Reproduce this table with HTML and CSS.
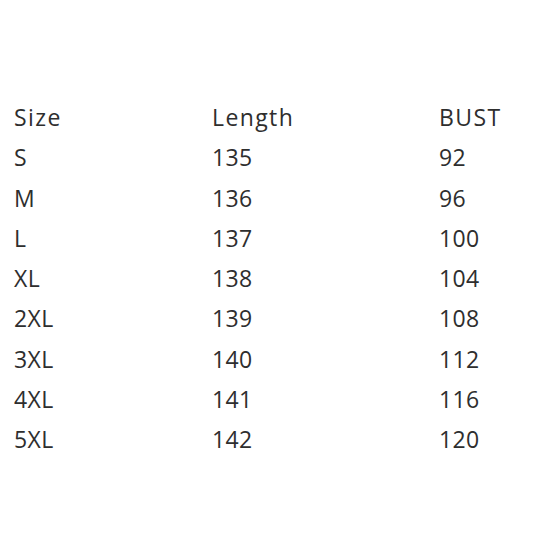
FILE: index.html
```html
<!DOCTYPE html>
<html>
<head>
<meta charset="utf-8">
<link rel="stylesheet" href="styles.css">
</head>
<body>
<div class="table">
  <div class="head">Size</div><div class="head">Length</div><div class="head">BUST</div>
  <div>S</div><div>135</div><div>92</div>
  <div>M</div><div>136</div><div>96</div>
  <div>L</div><div>137</div><div>100</div>
  <div>XL</div><div>138</div><div>104</div>
  <div>2XL</div><div>139</div><div>108</div>
  <div>3XL</div><div>140</div><div>112</div>
  <div>4XL</div><div>141</div><div>116</div>
  <div>5XL</div><div>142</div><div>120</div>
</div>
</body>
</html>
```
FILE: styles.css
```css
html, body {
  margin: 0;
  background: #fff;
}
body {
  width: 540px;
  height: 540px;
  font-family: "Open Sans", sans-serif;
  color: #2e2e2e;
}
.table {
  display: grid;
  grid-template-columns: 198px 227px auto;
  padding: 97px 0 0 14px;
  font-size: 23px;
  line-height: 40.25px;
  letter-spacing: 0.4px;
}
.head {
  letter-spacing: 1.4px;
}
```
